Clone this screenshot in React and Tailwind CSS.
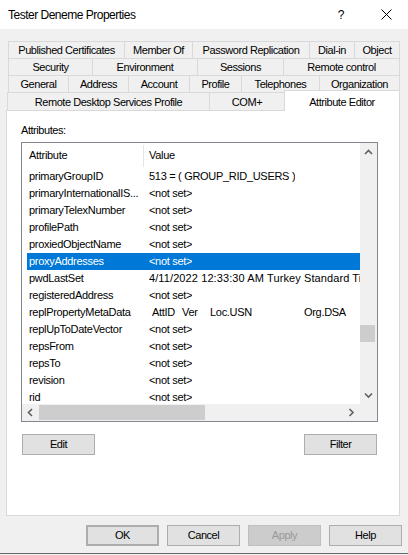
import React from "react";

const font = "font-['Liberation_Sans',Arial,sans-serif]";

function Tab({ w, label, last }) {
  return (
    <div
      className={`${w} h-full flex items-center justify-center border-t border-l border-[#d9d9d9] bg-[#f0f0f0] whitespace-nowrap ${last ? "border-r" : ""}`}
    >
      {label}
    </div>
  );
}

function Chevron({ dir }) {
  const paths = {
    up: "M1 5 L4.5 1.5 L8 5",
    down: "M1 1.5 L4.5 5 L8 1.5",
    left: "M5 1 L1.5 4.5 L5 8",
    right: "M1.5 1 L5 4.5 L1.5 8",
  };
  const vert = dir === "up" || dir === "down";
  return (
    <svg
      width={vert ? 9 : 7}
      height={vert ? 7 : 9}
      viewBox={vert ? "0 0 9 7" : "0 0 7 9"}
      fill="none"
      stroke="#606060"
      strokeWidth="1.6"
    >
      <path d={paths[dir]} />
    </svg>
  );
}

const rows = [
  ["primaryGroupID", "513 = ( GROUP_RID_USERS )"],
  ["primaryInternationalIS...", "<not set>"],
  ["primaryTelexNumber", "<not set>"],
  ["profilePath", "<not set>"],
  ["proxiedObjectName", "<not set>"],
  ["proxyAddresses", "<not set>", true],
  ["pwdLastSet", "WIDE"],
  ["registeredAddress", "<not set>"],
  ["replPropertyMetaData", "META"],
  ["replUpToDateVector", "<not set>"],
  ["repsFrom", "<not set>"],
  ["repsTo", "<not set>"],
  ["revision", "<not set>"],
  ["rid", "<not set>"],
];

function Btn({ children, w = "w-[73px]", cls = "" }) {
  return (
    <div
      className={`${w} h-[21px] flex items-center justify-center border border-[#adadad] bg-[#e1e1e1] ${cls}`}
    >
      {children}
    </div>
  );
}

function Value({ v }) {
  if (v === "META") {
    return (
      <div className="flex">
        <span className="w-[33px] pl-[3px]">AttID</span>
        <span className="w-[28px]">Ver</span>
        <span className="w-[94px]">Loc.USN</span>
        <span>Org.DSA</span>
      </div>
    );
  }
  if (v === "WIDE") {
    return (
      <div className="overflow-hidden tracking-[0.1px]">
        4/11/2022 12:33:30 AM Turkey Standard Time
      </div>
    );
  }
  return <div className="overflow-hidden">{v}</div>;
}

export default function App() {
  return (
    <div
      className={`w-[408px] h-[555px] bg-[#f0f0f0] flex flex-col ${font} text-[11px] tracking-[-0.45px] text-black overflow-hidden`}
    >
      {/* title bar */}
      <div className="h-[29px] shrink-0 bg-white flex items-center">
        <span className="ml-[8px] text-[12px] tracking-[-0.5px]">
          Tester Deneme Properties
        </span>
        <span className="ml-auto text-[12px] mr-[37px]">?</span>
        <svg width="11" height="11" viewBox="0 0 11 11" className="mr-[16px]">
          <path d="M0.5 0.5 L10.5 10.5 M10.5 0.5 L0.5 10.5" stroke="#000" strokeWidth="1" />
        </svg>
      </div>

      {/* tabs */}
      <div className="flex flex-col pt-[12px]">
        <div className="flex h-[17px] ml-[8px]">
          <Tab w="w-[116px]" label="Published Certificates" />
          <Tab w="w-[68px]" label="Member Of" />
          <Tab w="w-[117px]" label="Password Replication" />
          <Tab w="w-[45px]" label="Dial-in" />
          <Tab w="w-[46px]" label="Object" last />
        </div>
        <div className="flex h-[17px] ml-[8px]">
          <Tab w="w-[84px]" label="Security" />
          <Tab w="w-[105px]" label="Environment" />
          <Tab w="w-[86px]" label="Sessions" />
          <Tab w="w-[117px]" label="Remote control" last />
        </div>
        <div className="flex h-[17px] ml-[8px]">
          <Tab w="w-[60px]" label="General" />
          <Tab w="w-[60px]" label="Address" />
          <Tab w="w-[61px]" label="Account" />
          <Tab w="w-[52px]" label="Profile" />
          <Tab w="w-[78px]" label="Telephones" />
          <Tab w="w-[81px]" label="Organization" last />
        </div>
        <div className="flex h-[18px] ml-[7px] items-end">
          <div className="w-[202px] h-[18px] flex items-center justify-center pt-[2px] border-t border-l border-[#d9d9d9]">
            Remote Desktop Services Profile
          </div>
          <div className="w-[75px] h-[18px] flex items-center justify-center pt-[2px] border-t border-l border-[#d9d9d9]">
            COM+
          </div>
          <div className="relative z-10 w-[116px] h-[21px] -mb-[1px] bg-white flex items-start justify-center pt-[3px] border-t border-l border-r border-[#d9d9d9]">
            Attribute Editor
          </div>
        </div>
      </div>

      {/* panel */}
      <div className="ml-[6px] w-[394px] h-[406px] shrink-0 bg-white border border-[#d9d9d9] flex flex-col">
        <div className="ml-[14px] mt-[13px] h-[13px] leading-[13px]">Attributes:</div>

        {/* list */}
        <div className="ml-[14px] mt-[5px] w-[357px] h-[280px] border border-[#828790] grid grid-cols-[338px_17px] grid-rows-[261px_17px]">
          <div className="overflow-hidden bg-white tracking-[-0.3px]">
            <div className="h-[25px] flex items-center">
              <div className="w-[121px] pl-[7px]">Attribute</div>
              <div className="w-[1px] h-[22px] bg-[#e5e5e5]" />
              <div className="pl-[5px]">Value</div>
            </div>
            {rows.map(([a, v, sel]) => (
              <div
                key={a}
                className={`ml-[5px] w-[333px] h-[17px] flex items-center whitespace-nowrap overflow-hidden ${sel ? "bg-[#0078d7] text-white" : ""}`}
              >
                <div className="w-[122px] pl-[2px] shrink-0">{a}</div>
                <Value v={v} />
              </div>
            ))}
          </div>

          {/* vertical scrollbar */}
          <div className="bg-[#f0f0f0] flex flex-col">
            <div className="h-[17px] flex items-center justify-center pt-[2px]">
              <Chevron dir="up" />
            </div>
            <div className="h-[165px]" />
            <div className="w-[15px] h-[17px] bg-[#cdcdcd]" />
            <div className="flex-1" />
            <div className="h-[17px] flex items-center justify-center pb-[1px]">
              <Chevron dir="down" />
            </div>
          </div>

          {/* horizontal scrollbar */}
          <div className="bg-[#f0f0f0] flex items-stretch">
            <div className="w-[17px] flex items-center justify-center">
              <Chevron dir="left" />
            </div>
            <div className="w-[166px] my-[1px] bg-[#cdcdcd]" />
            <div className="flex-1" />
            <div className="w-[17px] flex items-center justify-center">
              <Chevron dir="right" />
            </div>
          </div>
          <div className="bg-[#f0f0f0]" />
        </div>

        <div className="ml-[15px] mt-[12px] w-[355px] flex justify-between">
          <Btn>Edit</Btn>
          <Btn>Filter</Btn>
        </div>
      </div>

      {/* bottom buttons */}
      <div className="mt-[9px] mr-[6px] flex justify-end gap-[8px]">
        <Btn cls="border-2 border-[#0078d7]">OK</Btn>
        <Btn>Cancel</Btn>
        <Btn cls="!bg-[#cccccc] !border-[#bfbfbf] text-[#9a9a9a]">Apply</Btn>
        <Btn>Help</Btn>
      </div>

      <div className="mt-[7px] h-[1px] bg-[#6a6a6a]" />
    </div>
  );
}
